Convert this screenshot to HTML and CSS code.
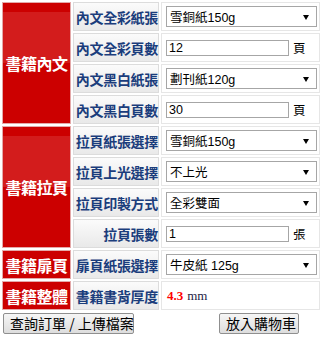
FILE: index.html
```html
<!DOCTYPE html>
<html lang="zh-Hant">
<head>
<meta charset="utf-8">
<title>書籍規格</title>
<link rel="stylesheet" href="styles.css">
</head>
<body>
<div class="spec">
  <div class="group g4 tall">書籍內文</div>
  <div class="label">內文全彩紙張</div>
  <div class="field"><div class="sel"><span>雪銅紙150g</span></div></div>
  <div class="label">內文全彩頁數</div>
  <div class="field"><div class="txt">12</div><span class="unit">頁</span></div>
  <div class="label">內文黑白紙張</div>
  <div class="field"><div class="sel"><span>劃刊紙120g</span></div></div>
  <div class="label">內文黑白頁數</div>
  <div class="field"><div class="txt">30</div><span class="unit">頁</span></div>

  <div class="group g4 tall">書籍拉頁</div>
  <div class="label">拉頁紙張選擇</div>
  <div class="field"><div class="sel"><span>雪銅紙150g</span></div></div>
  <div class="label">拉頁上光選擇</div>
  <div class="field"><div class="sel"><span>不上光</span></div></div>
  <div class="label">拉頁印製方式</div>
  <div class="field"><div class="sel"><span>全彩雙面</span></div></div>
  <div class="label">拉頁張數</div>
  <div class="field"><div class="txt">1</div><span class="unit">張</span></div>

  <div class="group">書籍扉頁</div>
  <div class="label">扉頁紙張選擇</div>
  <div class="field"><div class="sel"><span>牛皮紙 125g</span></div></div>

  <div class="group">書籍整體</div>
  <div class="label">書籍書背厚度</div>
  <div class="field"><span class="num">4.3</span><span class="mm">mm</span></div>
</div>
<div class="actions">
  <button class="btn btn-query" type="button">查詢訂單 / 上傳檔案</button>
  <button class="btn btn-cart" type="button">放入購物車</button>
</div>
</body>
</html>
```

FILE: styles.css
```css
html, body {
  margin: 0;
  padding: 0;
  background: #ffffff;
}
body {
  width: 322px;
  font-family: "Liberation Sans", "Noto Sans CJK TC", sans-serif;
}
.spec {
  display: grid;
  grid-template-columns: 69px 86px 159px;
  grid-auto-rows: 29px;
  gap: 2px;
  padding: 2px;
}
.group {
  box-sizing: border-box;
  border: 1px solid #e4a9a9;
  background: #cc0000;
  color: #ffffff;
  font-family: "Noto Sans CJK TC", sans-serif;
  font-weight: bold;
  font-size: 16px;
  display: flex;
  align-items: center;
  justify-content: center;
  white-space: nowrap;
  letter-spacing: -0.5px;
}
.g4 {
  grid-row: span 4;
}
.tall {
  background: linear-gradient(to bottom, #cc0000 0, #cc0000 9px, #d31c1c 9px, #d31c1c 60px, #cc0000 60px);
}
.label {
  box-sizing: border-box;
  border: 1px solid #dcdcdc;
  background: linear-gradient(to bottom, #fbfbfb, #e9e9e9);
  color: #1b3d7c;
  font-family: "Noto Sans CJK TC", sans-serif;
  font-weight: bold;
  font-size: 14px;
  display: flex;
  align-items: center;
  justify-content: flex-end;
  white-space: nowrap;
  padding-right: 0;
  letter-spacing: -0.3px;
}
.field {
  box-sizing: border-box;
  border: 1px solid #e6e6e6;
  background: #ffffff;
  display: flex;
  align-items: center;
  padding-left: 4px;
  font-size: 12px;
  color: #000000;
}
.sel {
  position: relative;
  box-sizing: border-box;
  width: 151px;
  height: 21px;
  border: 1px solid #a6a6a6;
  background: #ffffff;
  display: flex;
  align-items: center;
  padding-left: 3px;
  font-size: 12.5px;
  white-space: nowrap;
}
.sel::after {
  content: "";
  position: absolute;
  right: 7px;
  top: 8px;
  border-left: 3.5px solid transparent;
  border-right: 3.5px solid transparent;
  border-top: 5px solid #000000;
}
.txt {
  box-sizing: border-box;
  width: 123px;
  height: 16px;
  border: 1px solid #a6a6a6;
  display: flex;
  align-items: center;
  padding-left: 2px;
  font-size: 12.5px;
}
.unit {
  margin-left: 4px;
  font-size: 12.5px;
}
.num {
  font-family: "Liberation Serif", serif;
  font-weight: bold;
  color: #ff0000;
  font-size: 13px;
  margin-left: 1px;
}
.mm {
  font-family: "Liberation Serif", serif;
  color: #222244;
  font-size: 13px;
  margin-left: 4px;
}
.actions {
  display: flex;
  align-items: center;
  padding: 1px 0 0 3px;
}
.btn {
  box-sizing: border-box;
  height: 21px;
  border: 1px solid #8f8f8f;
  border-radius: 2px;
  background: linear-gradient(to bottom, #f6f6f6, #dddddd);
  font-family: "Noto Sans CJK TC", sans-serif;
  font-size: 14px;
  color: #000000;
  padding: 0 6px;
  line-height: 19px;
  white-space: nowrap;
}
.btn-query {
  width: 131px;
}
.btn-cart {
  width: 80px;
  margin-left: 85px;
}
```
